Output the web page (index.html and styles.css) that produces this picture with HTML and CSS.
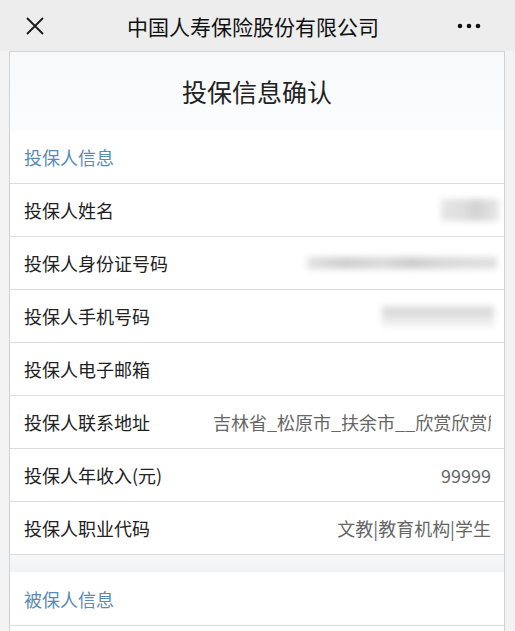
FILE: index.html
```html
<!DOCTYPE html>
<html>
<head>
<meta charset="UTF-8">
<title>投保信息确认</title>
<link rel="stylesheet" href="styles.css">
</head>
<body>
	<div class="topBar">
		<svg class="closeIcon" width="20" height="20" viewBox="0 0 20 20">
			<path d="M2 2 L18 18 M18 2 L2 18" stroke="#1a1a1a" stroke-width="1.8" fill="none"/>
		</svg>
		<div class="topTitle">中国人寿保险股份有限公司</div>
		<svg class="moreIcon" width="24" height="8" viewBox="0 0 24 8">
			<circle cx="3" cy="4" r="2.3" fill="#111"/>
			<circle cx="12" cy="4" r="2.3" fill="#111"/>
			<circle cx="21" cy="4" r="2.3" fill="#111"/>
		</svg>
	</div>

	<div class="card">
		<div class="pageTitle">投保信息确认</div>

		<div class="secHead">投保人信息</div>
		<div class="row">
			<span class="label">投保人姓名</span>
			<span class="blur blurName"></span>
		</div>
		<div class="row">
			<span class="label">投保人身份证号码</span>
			<span class="blur blurId"></span>
		</div>
		<div class="row">
			<span class="label">投保人手机号码</span>
			<span class="blur blurPhone"></span>
		</div>
		<div class="row">
			<span class="label">投保人电子邮箱</span>
			<span class="value"></span>
		</div>
		<div class="row">
			<span class="label">投保人联系地址</span>
			<span class="value clip">吉林省_松原市_扶余市__欣赏欣赏欣赏</span>
		</div>
		<div class="row">
			<span class="label">投保人年收入(元)</span>
			<span class="value">99999</span>
		</div>
		<div class="row">
			<span class="label">投保人职业代码</span>
			<span class="value">文教|教育机构|学生</span>
		</div>

		<div class="spacer"></div>

		<div class="secHead">被保人信息</div>
		<div class="row"></div>
	</div>
</body>
</html>
```

FILE: styles.css
```css
body {
	margin: 0;
	background: #f3f3f4;
	font-family: "Noto Sans CJK SC", "Noto Sans", sans-serif;
	overflow: hidden;
}

.topBar {
	height: 51px;
	background: #ededed;
	display: grid;
	grid-template-columns: 1fr auto 1fr;
	align-items: center;
	padding: 0 34px 0 25px;
	box-sizing: border-box;
}

.closeIcon {
	margin-top: 1px;
}

.topTitle {
	font-size: 21px;
	color: #111;
	margin-top: 1px;
}

.moreIcon {
	margin-top: 1px;
	justify-self: end;
}

.card {
	margin: 0 10px 0 9px;
	background: #fff;
	border-left: 1px solid #cfd1d4;
	border-right: 1px solid #cfd1d4;
	border-top: 1px solid #d6d6d6;
}

.pageTitle {
	height: 78px;
	display: flex;
	align-items: center;
	justify-content: center;
	font-size: 25px;
	color: #222;
	background: linear-gradient(#f8f9fb, #fbfcfd);
	box-sizing: border-box;
}

.secHead {
	height: 54px;
	display: flex;
	align-items: center;
	padding: 0 14px;
	font-size: 18px;
	color: #5a8bb5;
	border-bottom: 1px solid #dcdcdc;
	box-sizing: border-box;
}

.row {
	height: 53px;
	display: flex;
	align-items: center;
	justify-content: space-between;
	padding: 0 13px 0 14px;
	border-bottom: 1px solid #dcdcdc;
	box-sizing: border-box;
	font-size: 18px;
}

.label {
	color: #222;
	white-space: nowrap;
}

.value {
	color: #666;
	white-space: nowrap;
}

.clip {
	width: 278px;
	overflow: hidden;
}

.blur {
	display: block;
	background: #d8d8d8;
	filter: blur(3px);
}

.blurName {
	width: 58px;
	height: 22px;
	margin-right: -8px;
	background: linear-gradient(90deg, #e6e6e6 0%, #dedede 40%, #d2d2d2 60%, #e8e8e8 100%);
}

.blurId {
	width: 190px;
	height: 12px;
	margin-right: -6px;
	background: linear-gradient(90deg, #e2e2e2, #cfcfcf 20%, #dadada 40%, #cccccc 55%, #d8d8d8 70%, #e0e0e0);
}

.blurPhone {
	width: 112px;
	height: 20px;
	margin-right: -3px;
	background: linear-gradient(#dcdcdc 55%, #ececec 55%);
}

.spacer {
	height: 16px;
	background: linear-gradient(#f7f8fa, #f2f3f5);
	border-bottom: 1px solid #f0f1f3;
}
```
